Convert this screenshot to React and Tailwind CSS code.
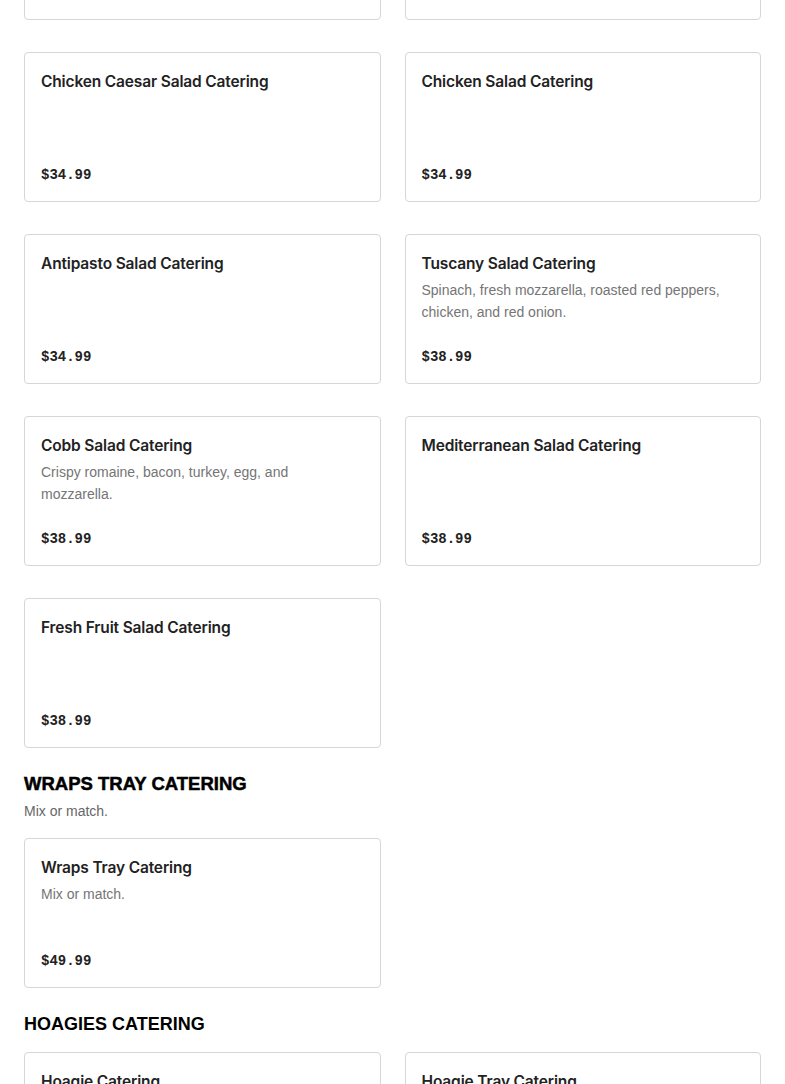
import React from "react";

const Card = ({ title, desc, price }) => (
  <div className="flex h-[150px] flex-col justify-between rounded-[4px] border border-[#d6d6d6] bg-white px-4 pt-[17px] pb-[15px]">
    <div>
      <div className="font-['Inter',sans-serif] text-[15.5px] leading-6 font-semibold tracking-[-0.15px] text-[#222]">
        {title}
      </div>
      {desc && (
        <p className="mt-[3px] font-['Liberation_Sans',Arial,sans-serif] text-[14px] leading-[22px] text-[#757575]">
          {desc}
        </p>
      )}
    </div>
    <div className="font-['Liberation_Mono',monospace] text-[14px] leading-[22px] font-bold text-[#222]">
      {price}
    </div>
  </div>
);

const salads = [
  { title: "Garden Salad Catering", price: "$29.99" },
  { title: "Greek Salad Catering", price: "$29.99" },
  { title: "Chicken Caesar Salad Catering", price: "$34.99" },
  { title: "Chicken Salad Catering", price: "$34.99" },
  { title: "Antipasto Salad Catering", price: "$34.99" },
  {
    title: "Tuscany Salad Catering",
    desc: "Spinach, fresh mozzarella, roasted red peppers, chicken, and red onion.",
    price: "$38.99",
  },
  {
    title: "Cobb Salad Catering",
    desc: "Crispy romaine, bacon, turkey, egg, and mozzarella.",
    price: "$38.99",
  },
  { title: "Mediterranean Salad Catering", price: "$38.99" },
  { title: "Fresh Fruit Salad Catering", price: "$38.99" },
];

export default function App() {
  return (
    <div className="h-[1084px] overflow-hidden bg-white font-['Liberation_Sans',Arial,sans-serif]">
      <div className="-mt-[130px] px-6">
        <div className="grid grid-cols-2 gap-x-6 gap-y-8">
          {salads.map((s) => (
            <Card key={s.title} {...s} />
          ))}
        </div>

        <section className="mt-6">
          <h2 className="text-[18.5px] leading-6 font-black text-black [-webkit-text-stroke:0.5px_black]">
            WRAPS TRAY CATERING
          </h2>
          <p className="mt-[5px] text-[14px] leading-[20px] text-[#666]">Mix or match.</p>
          <div className="mt-[17px] grid grid-cols-2 gap-x-6 gap-y-8">
            <Card title="Wraps Tray Catering" desc="Mix or match." price="$49.99" />
          </div>
        </section>

        <section className="mt-6">
          <h2 className="text-[18px] leading-6 font-bold text-black">
            HOAGIES CATERING
          </h2>
          <div className="mt-4 grid grid-cols-2 gap-x-6 gap-y-8">
            <Card title="Hoagie Catering" price="$59.99" />
            <Card title="Hoagie Tray Catering" price="$59.99" />
          </div>
        </section>
      </div>
    </div>
  );
}
